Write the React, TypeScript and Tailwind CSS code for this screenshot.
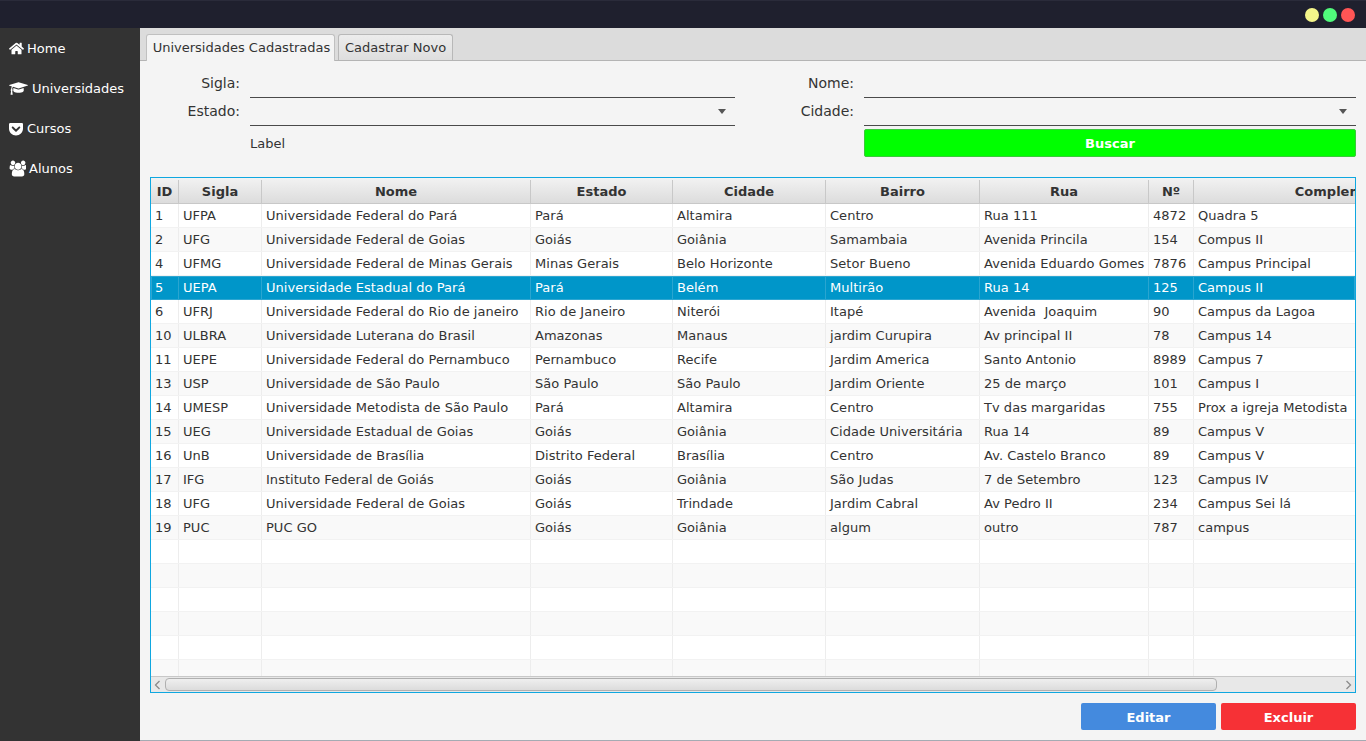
import React from "react";
import { FaHome, FaGetPocket } from "react-icons/fa";

const widths = [28, 83, 269, 142, 153, 154, 169, 45, 304];
const headers = ["ID", "Sigla", "Nome", "Estado", "Cidade", "Bairro", "Rua", "Nº", "Complemento"];
const rows: string[][] = [
  ["1", "UFPA", "Universidade Federal do Pará", "Pará", "Altamira", "Centro", "Rua 111", "4872", "Quadra 5"],
  ["2", "UFG", "Universidade Federal de Goias", "Goiás", "Goiânia", "Samambaia", "Avenida Princila", "154", "Compus II"],
  ["4", "UFMG", "Universidade Federal de Minas Gerais", "Minas Gerais", "Belo Horizonte", "Setor Bueno", "Avenida Eduardo Gomes", "7876", "Campus Principal"],
  ["5", "UEPA", "Universidade Estadual do Pará", "Pará", "Belém", "Multirão", "Rua 14", "125", "Campus II"],
  ["6", "UFRJ", "Universidade Federal do Rio de janeiro", "Rio de Janeiro", "Niterói", "Itapé", "Avenida  Joaquim", "90", "Campus da Lagoa"],
  ["10", "ULBRA", "Universidade Luterana do Brasil", "Amazonas", "Manaus", "jardim Curupira", "Av principal II", "78", "Campus 14"],
  ["11", "UEPE", "Universidade Federal do Pernambuco", "Pernambuco", "Recife", "Jardim America", "Santo Antonio", "8989", "Campus 7"],
  ["13", "USP", "Universidade de São Paulo", "São Paulo", "São Paulo", "Jardim Oriente", "25 de março", "101", "Campus I"],
  ["14", "UMESP", "Universidade Metodista de São Paulo", "Pará", "Altamira", "Centro", "Tv das margaridas", "755", "Prox a igreja Metodista"],
  ["15", "UEG", "Universidade Estadual de Goias", "Goiás", "Goiânia", "Cidade Universitária", "Rua 14", "89", "Campus V"],
  ["16", "UnB", "Universidade de Brasília", "Distrito Federal", "Brasília", "Centro", "Av. Castelo Branco", "89", "Campus V"],
  ["17", "IFG", "Instituto Federal de Goiás", "Goiás", "Goiânia", "São Judas", "7 de Setembro", "123", "Campus IV"],
  ["18", "UFG", "Universidade Federal de Goias", "Goiás", "Trindade", "Jardim Cabral", "Av Pedro II", "234", "Campus Sei lá"],
  ["19", "PUC", "PUC GO", "Goiás", "Goiânia", "algum", "outro", "787", "campus"],
  ...Array.from({ length: 6 }, () => ["", "", "", "", "", "", "", "", ""]),
];

function Cap() {
  return (
    <svg width="19" height="15" viewBox="0 0 2304 1792" fill="currentColor">
      <path d="M1774 836l18 316q4 69-82 128t-235 93.5-323 34.5-323-34.5-235-93.5-82-128l18-316 574 181q22 7 48 7t48-7zm530-324q0 23-22 31l-1120 352q-4 1-10 1t-10-1l-652-206q-43 34-71 111.5t-34 178.5q63 36 63 109 0 69-58 107l58 433q2 14-8 25-9 11-24 11h-192q-15 0-24-11-10-11-8-25l58-433q-58-38-58-107 0-73 65-111 11-207 98-330l-333-104q-22-8-22-31t22-31l1120-352q4-1 10-1t10 1l1120 352q22 8 22 31z" />
    </svg>
  );
}

function Users() {
  return (
    <svg width="17" height="17" viewBox="0 0 1920 1792" fill="currentColor">
      <path d="M657 896q-162 5-265 128h-134q-82 0-138-40.5t-56-118.5q0-353 124-353 6 0 43.5 21t97.5 42.5 119 21.5q67 0 133-23-5 37-5 66 0 139 81 256zm1071 637q0 120-73 189.5t-194 69.5h-874q-121 0-194-69.5t-73-189.5q0-53 3.5-103.5t14-109 26.5-108.5 43-97.5 62-81 85.5-53.5 111.5-20q10 0 43 21.5t73 48 107 48 135 21.5 135-21.5 107-48 73-48 43-21.5q61 0 111.5 20t85.5 53.5 62 81 43 97.5 26.5 108.5 14 109 3.5 103.5zm-1024-1277q0 106-75 181t-181 75-181-75-75-181 75-181 181-75 181 75 75 181zm704 384q0 159-112.5 271.5t-271.5 112.5-271.5-112.5-112.5-271.5 112.5-271.5 271.5-112.5 271.5 112.5 112.5 271.5zm576 225q0 78-56 118.5t-138 40.5h-134q-103-123-265-128 81-117 81-256 0-29-5-66 66 23 133 23 59 0 119-21.5t97.5-42.5 43.5-21q124 0 124 353zm-128-609q0 106-75 181t-181 75-181-75-75-181 75-181 181-75 181 75 75 181z" />
    </svg>
  );
}

const nav = [
  { icon: <FaHome size={15} />, label: "Home", gap: "gap-[3px]" },
  { icon: <Cap />, label: "Universidades", gap: "gap-[4px]" },
  { icon: <FaGetPocket size={16} className="-ml-[1px]" />, label: "Cursos", gap: "gap-[3px]" },
  { icon: <Users />, label: "Alunos", gap: "gap-[3px]" },
];

function Field({ select }: { select?: boolean }) {
  return (
    <div className="h-[28px] border-b border-[#4a4a4a] flex items-center justify-end pr-[9px]">
      {select && <div className="w-0 h-0 border-l-[4.5px] border-r-[4.5px] border-t-[5px] border-l-transparent border-r-transparent border-t-[#555555]" />}
    </div>
  );
}

function Chevron({ left }: { left?: boolean }) {
  return (
    <svg width="7" height="10" viewBox="0 0 7 10" className="shrink-0">
      <path d={left ? "M5.5 1 L1.5 5 L5.5 9" : "M1.5 1 L5.5 5 L1.5 9"} fill="none" stroke="#8a8a8a" strokeWidth="1.3" />
    </svg>
  );
}

export default function App() {
  return (
    <div className="w-[1366px] h-[741px] flex flex-col overflow-hidden text-[13px] text-[#333333] bg-[#f4f4f4] font-['DejaVu_Sans',sans-serif]">
      <div className="h-[28px] shrink-0 bg-[#1f202e] border-t border-[#2a2b3a] flex items-center justify-end gap-[4px] pr-[11px]">
        <div className="w-[14px] h-[14px] rounded-full bg-[#f4f58a]" />
        <div className="w-[14px] h-[14px] rounded-full bg-[#50fa7b]" />
        <div className="w-[14px] h-[14px] rounded-full bg-[#ff5555]" />
      </div>
      <div className="flex flex-1 min-h-0">
        <div className="w-[140px] shrink-0 bg-[#333333] text-white">
          {nav.map((n) => (
            <div key={n.label} className={`h-[40px] pl-[9px] pt-[1px] flex items-center ${n.gap}`}>
              {n.icon}
              <span>{n.label}</span>
            </div>
          ))}
        </div>
        <div className="flex-1 min-w-0 flex flex-col border-b border-[#a4abb3]">
          <div className="h-[33px] shrink-0 bg-[#dcdcdc] border-b border-[#b4b4b4] flex items-end pl-[6px] gap-[3px]">
            <div className="h-[27px] -mb-px w-[189px] pl-[2px] flex items-center justify-center bg-[#f4f4f4] border border-b-0 border-[#c0c0c0] rounded-t-[3px]">Universidades Cadastradas</div>
            <div className="h-[26px] w-[115px] flex items-center justify-center bg-gradient-to-b from-[#ececec] to-[#dedede] border border-b-0 border-[#b8b8b8] rounded-t-[3px]">Cadastrar Novo</div>
          </div>
          <div className="flex-1 min-h-0 flex flex-col px-[10px] pt-[9px]">
            <div className="grid grid-cols-[90px_485px_109px_492px] gap-x-[10px] items-center">
              <div className="text-right text-[14px] pb-[2px]">Sigla:</div>
              <Field />
              <div className="text-right text-[14px] pb-[2px]">Nome:</div>
              <Field />
              <div className="text-right text-[14px] pb-[2px]">Estado:</div>
              <Field select />
              <div className="text-right text-[14px] pb-[2px]">Cidade:</div>
              <Field select />
              <div />
              <div className="mt-[5px]">Label</div>
              <div />
              <div className="mt-[3px] h-[28px] pt-[1px] flex items-center justify-center bg-[#00ff00] border border-[#3cc83c] rounded-[2px] text-white font-bold">Buscar</div>
            </div>
            <div className="mt-[20px] h-[516px] shrink-0 flex flex-col border border-[#0fa7e0] overflow-hidden bg-white">
              <div className="flex h-[26px] shrink-0 pt-[2px] border-b border-[#c8c8c8] bg-gradient-to-b from-[#f2f2f2] to-[#dcdcdc] font-bold">
                {headers.map((h, i) => (
                  <div key={h} style={{ width: widths[i] }} className="shrink-0 border-r border-[#c8c8c8] flex items-center justify-center">{h}</div>
                ))}
              </div>
              <div className="flex-1 min-h-0 overflow-hidden tracking-[0.03px]">
                {rows.map((r, ri) => {
                  const selected = ri === 3;
                  return (
                    <div key={ri} className={`flex h-[24px] ${selected ? "bg-[#0096c9] text-white shadow-[inset_0_0_0_1px_#2ea6d1]" : ri % 2 === 0 ? "bg-white border-b border-[#f2f2f2]" : "bg-[#f9f9f9] border-b border-[#f2f2f2]"}`}>
                      {r.map((c, ci) => (
                        <div key={ci} style={{ width: widths[ci] }} className={`shrink-0 pl-[4px] flex items-center whitespace-pre border-r ${selected ? "border-[#2aa5d0]" : "border-[#ededed]"}`}>{c}</div>
                      ))}
                    </div>
                  );
                })}
              </div>
              <div className="h-[16px] shrink-0 bg-[#e8e8e8] border-t border-[#c8c8c8] flex items-center pl-[3px] pr-[3px]">
                <Chevron left />
                <div className="ml-[4px] w-[1052px] h-[13px] rounded-[4px] border border-[#b0b0b0] bg-gradient-to-b from-[#efefef] to-[#dcdcdc]" />
                <div className="flex-1" />
                <Chevron />
              </div>
            </div>
            <div className="mt-[10px] flex justify-end gap-[5px] text-white font-bold">
              <div className="w-[135px] h-[27px] pt-[2px] flex items-center justify-center bg-[#448ade] rounded-[2px]">Editar</div>
              <div className="w-[135px] h-[27px] pt-[2px] flex items-center justify-center bg-[#f63136] rounded-[2px]">Excluir</div>
            </div>
          </div>
        </div>
      </div>
    </div>
  );
}
